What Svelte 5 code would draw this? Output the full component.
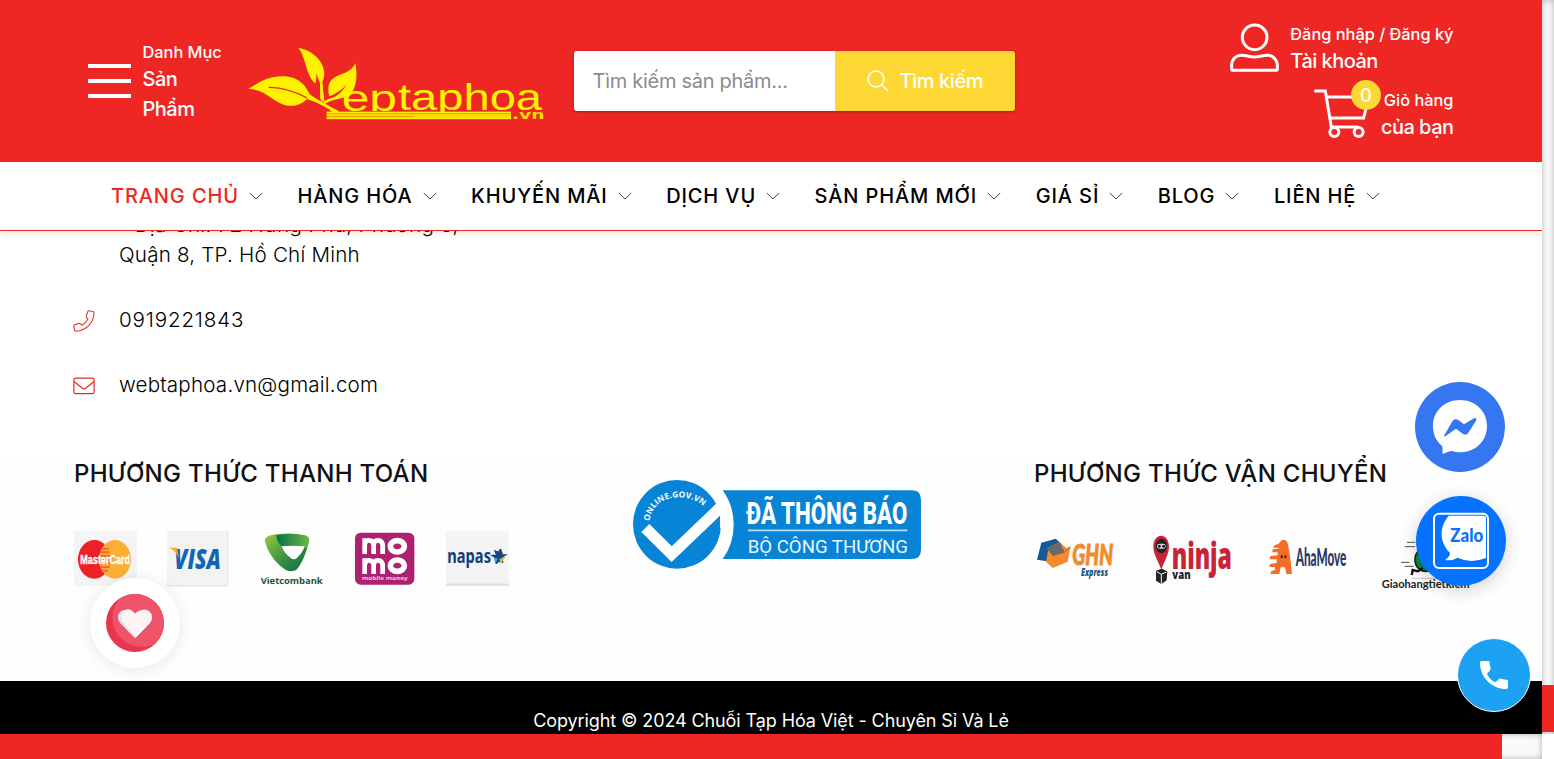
<script>
  const menu = ['TRANG CHỦ', 'HÀNG HÓA', 'KHUYẾN MÃI', 'DỊCH VỤ', 'SẢN PHẨM MỚI', 'GIÁ SỈ', 'BLOG', 'LIÊN HỆ'];
</script>

<div class="screen">
  <div class="page">
    <header>
      <div class="top">
        <div class="category">
          <div class="bars"><i></i><i></i><i></i></div>
          <div class="category-text"><span class="small">Danh Mục</span><span class="big">Sản<br />Phẩm</span></div>
        </div>

        <svg class="logo" viewBox="534 78 894 228" width="298" height="76">
          <defs><clipPath id="low"><path d="M800 212H985V276H800z" /></clipPath></defs>
          <g fill="#fff200">
            <path d="M535 206C565 190 590 168 642 169C690 172 708 199 719 223L745 240C759 247 776 263 808 276L788 278C768 256 738 246 711 237C697 252 676 260 653 257C610 250 592 209 535 206Z" />
            <path d="M685 84C722 88 762 121 763 160C763 174 758 183 756 191L764 246L751 238L751 190C745 180 742 168 739 159C739 170 740 181 736 190C709 170 708 112 685 84Z" />
            <path d="M856 130C862 158 861 194 846 217C834 233 807 238 784 237C803 226 819 213 829 194C812 213 795 222 778 229C773 211 772 187 791 174C813 160 843 159 856 130Z" />
          </g>
          <path d="M596 202C640 201 680 217 712 234" fill="none" stroke="#ee2724" stroke-width="4" />
          <path d="M712 230C742 242 768 258 803 276M754 190L757 245M762 249C777 237 800 236 815 228" fill="none" stroke="#fff200" stroke-width="8" />
          <g fill="#fff200" font-family="Liberation Sans" font-size="110">
            <text x="815" y="272" textLength="166" lengthAdjust="spacingAndGlyphs" clip-path="url(#low)">eb</text>
            <text x="984" y="271" textLength="432" lengthAdjust="spacingAndGlyphs">taphoa</text>
          </g>
          <path d="M770 275h553v22H770z" fill="#fddb00" />
          <path d="M770 277h553M770 296h553" stroke="#fff200" stroke-width="3" />
          <path d="M770 281h553M770 290h260" stroke="#ee7a14" stroke-width="2" />
          <text x="1326" y="297" textLength="98" lengthAdjust="spacingAndGlyphs" fill="#fddb00" font-family="DejaVu Sans" font-weight="700" font-size="36">.vn</text>
        </svg>

        <div class="search">
          <div class="field">Tìm kiếm sản phẩm...</div>
          <div class="button">
            <svg width="22" height="22" viewBox="0 0 22 22" fill="none" stroke="#fff" stroke-width="1.5"><circle cx="9" cy="9" r="7.9" /><path d="M14.7 14.7L20.7 20.7" /></svg>
            <span>Tìm kiếm</span>
          </div>
        </div>

        <div class="user">
          <div class="account">
            <svg width="49" height="48" viewBox="90 72 147 144" fill="none" stroke="#fff" stroke-width="9"><circle cx="164" cy="112" r="37" /><path d="M95 206V195C95 177 109 166 124 166C141 166 149 171 163 171C177 171 186 166 203 166C218 166 232 179 232 196V206Q232 211 227 211H100Q95 211 95 206Z" /></svg>
            <div class="label"><span class="small">Đăng nhập / Đăng ký</span><span class="big">Tài khoản</span></div>
          </div>
          <div class="cart">
            <div class="trolley">
              <svg width="53" height="50" viewBox="342 268 159 150" fill="none" stroke="#fff" stroke-width="9"><path d="M343 274H376L394 382H474M380 292H506L491 355H391" /><circle cx="403" cy="397" r="13.5" /><circle cx="476" cy="397" r="13.5" /></svg>
              <b>0</b>
            </div>
            <div class="label right"><span class="small">Giỏ hàng</span><span class="big">của bạn</span></div>
          </div>
        </div>
      </div>

      <nav>
        {#each menu as item, i}
          <a class:active={i === 0}>{item}<svg width="14" height="8" viewBox="0 0 14 8" fill="none" stroke="#444" stroke-width="1"><path d="M.8 1L7 7L13.2 1" /></svg></a>
        {/each}
      </nav>
    </header>

    <main>
      <section class="contact">
        <p class="address"><span>- Địa Chỉ: 72 Hưng Phú, Phường 8,</span><br />Quận 8, TP. Hồ Chí Minh</p>
        <p>
          <svg width="22" height="22" viewBox="0 0 22 22" fill="none" stroke="#ee2724" stroke-width="1.1" stroke-linejoin="round"><path d="M15.7.8L20 1.5Q21.2 2 21 3.3C20.5 13 13.3 20.5 3.3 21.2Q2 21.3 1.6 20L.8 16.4Q.6 15.5 1.5 15L6 13.3Q7 13 7.7 13.8L9 15.2C11.7 13.9 13.8 11.6 15 8.9L13.5 7.6Q12.9 7 13.2 6.2L14.8 1.5Q15 .7 15.7.8Z" /></svg>
          <span class="phone">0919221843</span>
        </p>
        <p>
          <svg width="22" height="18" viewBox="0 0 22 18" fill="none" stroke="#ee2724" stroke-width="1.2"><rect x=".9" y="1.2" width="20.2" height="15.4" rx="1.7" /><path d="M1 4.5L9.4 11.2Q11 12.4 12.6 11.2L21 4.5" /></svg>
          <span class="mail">webtaphoa.vn@gmail.com</span>
        </p>
      </section>

      <section class="partners">
        <div class="payment">
          <h2>PHƯƠNG THỨC THANH TOÁN</h2>
          <div class="brands pay">
            <svg width="63" height="56" viewBox="42 273 189 168"><path d="M42 273h189v165H42z" fill="#f4f4f4" /><ellipse cx="103" cy="358" rx="49" ry="58" fill="#ed2027" /><ellipse cx="165" cy="358" rx="48" ry="58" fill="#fbb033" /><path d="M124 326h22M120 337h28M118 348h32M118 359h32M118 370h32M121 381h28M125 392h20" stroke="#f26a2c" stroke-width="6" /><text x="61" y="373" textLength="149" lengthAdjust="spacingAndGlyphs" font-family="Liberation Sans" font-weight="700" font-size="36" fill="#fff" stroke="#fff" stroke-width="1">MasterCard</text></svg>
            <svg width="63" height="56" viewBox="321 273 189 168"><path d="M321 273h182v165H321z" fill="#f3f3f4" /><path d="M503 273v165H321" fill="none" stroke="#dcdee2" stroke-width="3" /><text x="343" y="386" textLength="140" lengthAdjust="spacingAndGlyphs" font-family="Open Sans" font-style="italic" font-weight="800" font-size="86" fill="#1265b5">VISA</text><path d="M327 323H351L357 354Q346 330 327 323Z" fill="#f7a928" /></svg>
            <svg width="63" height="56" viewBox="600 273 189 168"><defs><linearGradient id="leaf" x1="0" y1="0" x2="1" y2="1"><stop stop-color="#96cc3c" /><stop offset=".6" stop-color="#348a45" /><stop offset="1" stop-color="#006b4b" /></linearGradient><linearGradient id="fold"><stop stop-color="#00724d" /><stop offset="1" stop-color="#70b840" /></linearGradient></defs><path d="M614 300Q618 286 648 283Q699 277 738 287Q750 291 746 306C739 339 728 366 711 388Q696 399 676 389C644 367 623 338 614 300Z" fill="url(#leaf)" /><path d="M649 285Q697 278 738 287Q750 291 746 306L741 325Q730 317 711 317L665 319Q649 306 649 285Z" fill="url(#fold)" /><path d="M665 319Q698 315 734 319Q726 342 708 356Q701 360 692 354Q672 339 665 319Z" fill="#fff" /><text x="602" y="431" textLength="186" lengthAdjust="spacingAndGlyphs" font-family="Open Sans" font-weight="700" font-size="26" fill="#16563c">Vietcombank</text></svg>
            <svg width="63" height="56" viewBox="879 273 189 168"><rect x="885" y="278" width="178" height="156" rx="17" fill="#ae2070" /><g fill="none" stroke="#fff"><path d="M914 342V295M914 320Q914 301 926 301Q941 301 941 318V342M941 318Q941 301 953 301Q968 301 968 318V342M914 402V355M914 380Q914 361 926 361Q941 361 941 378V402M941 378Q941 361 953 361Q968 361 968 378V402" stroke-width="14" /><ellipse cx="1012" cy="319" rx="21" ry="17" stroke-width="17" /><ellipse cx="1012" cy="377" rx="21" ry="17" stroke-width="17" /></g><text x="906" y="419" textLength="137" lengthAdjust="spacingAndGlyphs" font-family="Open Sans" font-weight="700" font-size="17" fill="#f1c8df">mobile money</text></svg>
            <svg width="63" height="56" viewBox="1158 273 189 168"><path d="M1158 273h189v165h-189z" fill="#f4f4f4" /><path d="M1158 434h189" stroke="#dce1e3" stroke-width="7" /><text x="1162" y="368" textLength="131" lengthAdjust="spacingAndGlyphs" font-family="Noto Sans" font-weight="700" font-size="56" fill="#143d7c">napas</text><path d="M1306 334Q1320 340 1321 327L1327 345H1335L1321 354L1329 367Q1316 358 1308 371L1309 354L1298 347L1311 346Z" fill="#1b4582" stroke="#1b4582" stroke-width="5" /><path d="M1318 357L1336 350L1323 371Z" fill="#ddb23e" /><path d="M1302 354L1314 355L1306 372Z" fill="#2caadd" /></svg>
          </div>
        </div>

        <svg class="notice" width="288" height="90" viewBox="39 45 864 270">
          <defs><path id="arc" d="M88 169C94 123 130 97 176 97C208 97 236 107 262 134" /></defs>
          <path d="M308 76H875Q903 76 903 104V254Q903 282 875 282H308Q342 235 341 178Q341 122 308 76Z" fill="#0884d6" />
          <ellipse cx="171" cy="178" rx="132" ry="133" fill="#0884d6" />
          <path d="M76 189L155 267L307 122" fill="none" stroke="#fff" stroke-width="34" />
          <path d="M283 122L310 98L325 170L300 190V152Z" fill="#fff" />
          <text font-family="Open Sans" font-weight="700" font-size="25" fill="#fff"><textPath href="#arc" textLength="206">ONLINE.GOV.VN</textPath></text>
          <text x="379" y="177" textLength="483" lengthAdjust="spacingAndGlyphs" font-family="Roboto" font-weight="800" font-size="92" fill="#fff">ĐÃ THÔNG BÁO</text>
          <path d="M384 196H862" stroke="#b5dff5" stroke-width="5" />
          <text x="383" y="263" textLength="481" lengthAdjust="spacingAndGlyphs" font-family="Roboto" font-size="57" fill="#e8f7ff">BỘ CÔNG THƯƠNG</text>
        </svg>

        <div class="shipping">
          <h2>PHƯƠNG THỨC VẬN CHUYỂN</h2>
          <div class="brands ship">
            <svg width="88" height="64" viewBox="42 273 264 192"><path d="M64 308L107 296L117 305L91 365L51 359Z" fill="#155998" /><path d="M86 322L119 306L139 324L152 319L143 365L98 384L78 366Z" fill="#f5892b" /><path d="M86 322L119 306L134 337L99 347L80 326Z" fill="#686a6e" /><path d="M99 347L134 337L151 320" fill="none" stroke="#b66325" stroke-width="3" /><text x="157" y="374" textLength="122" lengthAdjust="spacingAndGlyphs" font-family="Lato" font-style="italic" font-weight="900" font-size="86" fill="#f38a2b" stroke="#f38a2b" stroke-width="3">GHN</text><text x="183" y="407" textLength="81" lengthAdjust="spacingAndGlyphs" font-family="Open Sans" font-style="italic" font-weight="800" font-size="30" fill="#245685">Express</text></svg>
            <svg width="88" height="64" viewBox="390 273 264 192"><path d="M400 320C400 276 447 276 447 320C447 343 432 365 424 389C416 364 400 344 400 320Z" fill="#c92338" /><ellipse cx="424" cy="318" rx="17" ry="22" fill="#242126" /><rect x="411" y="311" width="26" height="15" rx="7" fill="#d5cfd1" /><circle cx="418" cy="319" r="4" /><circle cx="431" cy="319" r="4" /><path d="M408 392L425 386L442 394L440 421L424 432L408 422Z" fill="#222" /><path d="M410 395L424 403L439 396M424 403V431" fill="none" stroke="#fff" stroke-width="3" /><text x="455" y="387" textLength="181" lengthAdjust="spacingAndGlyphs" font-family="Open Sans" font-weight="800" font-size="112" fill="#c92338">ninja</text><text x="457" y="417" textLength="55" lengthAdjust="spacingAndGlyphs" font-family="Open Sans" font-weight="800" font-size="37" fill="#222">van</text></svg>
            <svg width="88" height="64" viewBox="738 273 264 192"><path d="M776 311Q790 289 802 307Q812 350 816 402H799L795 382H782L778 402H751L754 393L765 390V381H748L750 372L770 369V358H749L750 349L773 346V337H757L758 328L776 326V323H760L763 316Z" fill="#f66c24" /><ellipse cx="785" cy="350" rx="3" ry="5" fill="#17213d" /><ellipse cx="796" cy="350" rx="3" ry="5" fill="#17213d" /><text x="827" y="378" textLength="152" lengthAdjust="spacingAndGlyphs" font-family="Lato" font-weight="900" font-size="72" fill="#293964">AhaMove</text></svg>
            <svg width="88" height="64" viewBox="36 483 264 192"><path d="M111 517h25M104 530h31M93 577h25M104 589h27" stroke="#575046" stroke-width="3" /><ellipse cx="166" cy="569" rx="31" ry="35" fill="#008b4b" stroke="#17251d" stroke-width="5" /><path d="M125 615L128 600L144 604L158 594" fill="none" stroke="#111" stroke-width="7" /><path d="M125 625H230" stroke="#aaa" stroke-width="2" /><text x="35" y="655" textLength="264" lengthAdjust="spacingAndGlyphs" font-family="Lato" font-weight="700" font-size="31" fill="#222">Giaohangtietkiem</text></svg>
          </div>
        </div>
      </section>
    </main>

    <footer>Copyright © 2024 Chuỗi Tạp Hóa Việt - Chuyên Sỉ Và Lẻ</footer>
  </div>

  <div class="track-y"><i></i></div>
  <div class="track-x"><i></i></div>
  <div class="corner"></div>

  <div class="float heart">
    <svg width="58" height="58" viewBox="138 462 174 174"><defs><clipPath id="disc"><circle cx="225" cy="549" r="87" /></clipPath></defs><circle cx="225" cy="549" r="87" fill="#e8364f" /><circle cx="244" cy="534" r="87" fill="#ee5369" clip-path="url(#disc)" /><path d="M225 595L181 550C160 524 190 492 225 521C260 492 290 524 269 550Z" fill="#dce5ec" /><path d="M229 591L193 553C180 539 182 516 202 508Q215 508 225 521C260 492 290 524 269 550Z" fill="#fff4f4" /></svg>
  </div>
  <div class="float messenger">
    <svg width="54" height="54" viewBox="189 90 162 162"><path d="M270 90C316 90 351 123 351 168C351 213 316 247 270 247Q256 247 246 243Q240 242 218 252L217 229C198 213 189 194 189 168C189 123 224 90 270 90Z" fill="#fff" /><path d="M222 197L247 154Q254 143 266 151L282 163L312 145Q321 142 319 151L294 190Q286 199 275 189L258 176L228 197Q222 200 222 197Z" fill="#3577f1" /></svg>
  </div>
  <div class="float zalo">
    <svg width="58" height="58" viewBox="186 425 174 174"><rect x="192" y="430" width="162" height="163" rx="15" fill="none" stroke="#fff" stroke-width="6" /><path d="M236 436C205 475 210 516 240 548Q239 560 226 568Q241 574 263 562Q302 581 348 563V443Q348 436 340 436Z" fill="#fff" /><text x="241" y="515" textLength="99" lengthAdjust="spacingAndGlyphs" font-family="Lato" font-weight="900" font-size="55" fill="#0573ff">Zalo</text></svg>
  </div>
  <div class="float call">
    <svg width="28" height="28" viewBox="240 123 84 84" fill="#fff"><path d="M244 123H265Q269 123 269 127C269 134 270 139 272 144Q273 148 270 151L261 162C267 174 275 182 286 187L297 177Q300 174 304 176C309 178 315 179 321 179Q324 179 324 183V202Q324 207 319 207C275 207 240 171 240 128Q240 123 244 123Z" /></svg>
  </div>
</div>

<style>
  :global(body) { margin: 0; overflow: hidden; background: #fff; }
  .screen { position: relative; box-sizing: border-box; width: 1554px; height: 759px; display: grid; grid-template: 734px 25px / 1542px 12px; font-family: Inter, sans-serif; overflow: hidden; }
  .screen :global(*) { box-sizing: border-box; }
  svg { display: block; flex: none; overflow: visible; }
  .page { width: 1542px; height: 734px; overflow: hidden; display: flex; flex-direction: column; }
  header { position: relative; z-index: 1; flex: none; height: 231px; background: #fff; border-bottom: 1px solid #ee2724; box-shadow: 0 2px 8px rgba(0, 0, 0, .1); }
  .top { height: 162px; background: #ee2724; color: #fff; display: flex; align-items: flex-start; padding-left: 88px; }
  .category { display: flex; width: 160px; padding-top: 38px; }
  .bars { width: 43px; padding-top: 26px; display: flex; flex-direction: column; gap: 11px; }
  .bars i { height: 4px; background: #fff; }
  .category-text { padding-left: 11.5px; }
  .category-text .big { margin-top: -2px; }
  .small { display: block; font-size: 16.35px; line-height: 28px; font-weight: 500; white-space: nowrap; }
  .big { display: block; font-size: 20px; line-height: 30px; font-weight: 500; white-space: nowrap; letter-spacing: -.52px; }
  .logo { margin-top: 46px; }
  .search { margin: 51px 0 0 28px; width: 441px; height: 60px; display: flex; border-radius: 3px; overflow: hidden; box-shadow: 0 1px 3px rgba(0, 0, 0, .3); }
  .field { width: 261px; background: #fff; color: #8c8c8c; padding-left: 18.5px; font-size: 20px; line-height: 60px; letter-spacing: -.28px; }
  .button { width: 180px; background: #fdd835; padding-left: 32px; display: flex; align-items: center; gap: 10.5px; font-size: 20px; font-weight: 500; white-space: nowrap; letter-spacing: -.42px; }
  .user { margin-left: auto; margin-right: 88.5px; padding-top: 20px; display: flex; flex-direction: column; align-items: flex-end; }
  .account { display: flex; gap: 11px; }
  .account > svg { margin-top: 4px; }
  .label .big { line-height: 26px; }
  .right { text-align: right; }
  .cart { display: flex; margin-top: 12px; gap: 14px; }
  .trolley { position: relative; padding-top: 3px; }
  .trolley b { position: absolute; left: 37px; top: -6px; width: 30px; height: 30px; border-radius: 50%; background: #fdd835; text-align: center; font-size: 18.5px; line-height: 30px; font-weight: 500; }
  nav { height: 68px; padding-left: 111px; display: flex; align-items: center; gap: 34.5px; font-size: 20px; font-weight: 500; letter-spacing: .88px; color: #000; }
  nav a { display: flex; align-items: center; gap: 10px; white-space: nowrap; }
  nav .active { color: #ee2724; }
  nav svg { position: relative; top: -.5px; }
  main { flex: none; height: 450px; background: #fff; }
  .contact { display: flow-root; height: 230px; margin: 0; padding-left: 73px; }
  .contact p { margin: 0; height: 30px; display: flex; align-items: center; gap: 24px; font-size: 20.6px; line-height: 30px; font-weight: 300; color: #000; letter-spacing: .2px; margin-bottom: 35px; white-space: nowrap; }
  .contact .address { display: block; height: 60px; margin-top: -21px; padding-left: 46px; }
  .address span { letter-spacing: .3px; }
  .contact .phone { letter-spacing: .83px; }
  .contact svg { margin-top: 2px; }
  .partners { height: 220px; background: #fefefe; display: flex; padding-left: 74px; }
  h2 { margin: 0; height: 70px; font-size: 24px; line-height: 26px; font-weight: 500; letter-spacing: .3px; color: #111; white-space: nowrap; }
  .payment { width: 559px; }
  .brands { display: flex; }
  .pay { gap: 30px; }
  .ship { gap: 28px; }
  .notice { margin-top: 19px; }
  .shipping { margin-left: 113px; }
  footer { flex: none; height: 53px; background: #000; color: #fff; text-align: center; font-size: 18px; line-height: 80px; letter-spacing: -.1px; }
  .track-y { background: #fafafa; box-shadow: inset 0 0 6px rgba(0, 0, 0, .3); padding-top: 685px; }
  .track-y i { display: block; height: 47px; background: #ee2724; }
  .track-x { background: #fafafa; box-shadow: inset 0 0 6px rgba(0, 0, 0, .3); }
  .track-x i { display: block; width: 1502px; height: 25px; background: #ee2724; }
  .corner { background: #fff; }
  .float { position: absolute; z-index: 3; width: 90px; height: 90px; border-radius: 50%; display: flex; align-items: center; justify-content: center; }
  .heart { left: 90px; top: 578px; background: #fff; box-shadow: 0 2px 18px rgba(0, 0, 0, .09); }
  .messenger { left: 1415px; top: 382px; background: #3577f1; }
  .zalo { left: 1416px; top: 495.5px; background: #0573ff; box-shadow: 0 4px 18px rgba(0, 0, 0, .18); }
  .call { left: 1457px; top: 638px; width: 74px; height: 74px; background: #1da1f2; border: 1px solid #fff; }
</style>
